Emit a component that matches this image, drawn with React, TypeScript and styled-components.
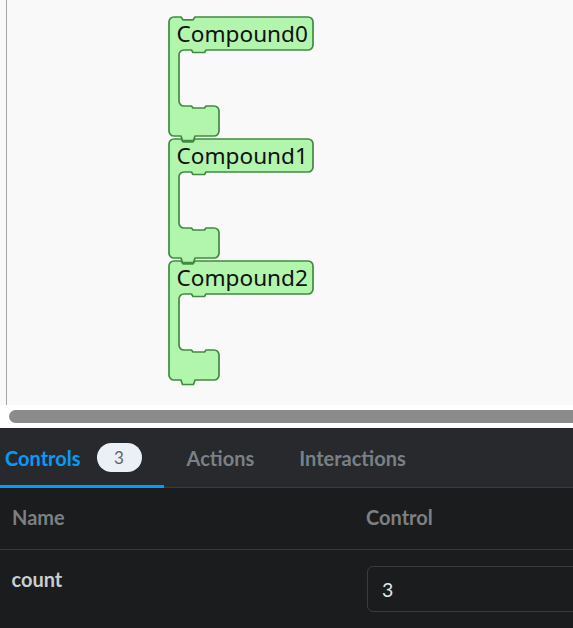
import React from "react";
import styled, { createGlobalStyle } from "styled-components";

const GlobalStyle = createGlobalStyle`
  html, body {
    margin: 0;
    padding: 0;
    background: #1b1c1d;
    overflow: hidden;
  }
  #root {
    width: 573px;
    height: 628px;
  }
`;

const Page = styled.div`
  display: flex;
  flex-direction: column;
  width: 573px;
  height: 628px;
  overflow: hidden;
`;

const Workspace = styled.div`
  position: relative;
  flex: none;
  height: 405px;
  background: #f9f9f9;
  &::before {
    content: "";
    position: absolute;
    left: 6px;
    top: 0;
    bottom: 0;
    width: 1px;
    background: #a6a6a6;
  }
`;

const BlockSvg = styled.svg<{ $top: number }>`
  position: absolute;
  left: 167px;
  top: ${(p) => p.$top}px;
  width: 152px;
  height: 132px;
  overflow: visible;
`;

const BlockPath = styled.path`
  fill: #b2f6ae;
  stroke: #418a41;
  stroke-width: 1.7;
  stroke-linejoin: round;
`;

const BlockLabel = styled.text`
  font-family: "Noto Sans", "Open Sans", sans-serif;
  font-size: 22.6px;
  fill: #111;
`;

const ScrollStrip = styled.div`
  flex: none;
  height: 23px;
  background: #ffffff;
  overflow: hidden;
  display: flex;
  align-items: flex-start;
`;

const ScrollThumb = styled.div`
  flex: none;
  margin: 5px 0 0 8.5px;
  width: 640px;
  height: 13px;
  border-radius: 6.5px;
  background: #8b8b8b;
`;

const Panel = styled.div`
  flex: 1;
  display: flex;
  flex-direction: column;
  background: #1b1c1d;
  font-family: Lato, "Noto Sans", sans-serif;
  overflow: hidden;
`;

const TabBar = styled.div`
  flex: none;
  height: 60px;
  background: #27292c;
  box-shadow: inset 0 -1px 0 #3a3c3f;
  overflow: hidden;
`;

const TabList = styled.div`
  display: flex;
  height: 100%;
  margin-left: -17.5px;
`;

const Tab = styled.div<{ $active?: boolean }>`
  display: flex;
  align-items: center;
  gap: 16px;
  padding: 0 22.5px 1px;
  font-size: 20px;
  font-weight: 700;
  color: ${(p) => (p.$active ? "#029cfd" : "#798186")};
  box-shadow: ${(p) => (p.$active ? "inset 0 -3px 0 #029cfd" : "none")};
  white-space: nowrap;
`;

const Badge = styled.span`
  display: inline-flex;
  align-items: center;
  justify-content: center;
  min-width: 45px;
  height: 29px;
  border-radius: 15px;
  background: #eaf0f6;
  color: #5a656d;
  font-size: 17px;
  font-weight: 400;
`;

const Table = styled.div`
  display: grid;
  grid-template-columns: 366px 1fr;
  overflow: hidden;
`;

const HeadCell = styled.div<{ $first?: boolean }>`
  padding: 17px 0 20px ${(p) => (p.$first ? "12px" : "0")};
  border-bottom: 1px solid #363839;
  font-size: 20px;
  font-weight: 700;
  line-height: 24px;
  color: #7d8083;
`;

const NameCell = styled.div`
  padding: 17px 0 0 11.5px;
  font-size: 20px;
  font-weight: 700;
  line-height: 24px;
  color: #c9cdcf;
`;

const ControlCell = styled.div`
  padding-top: 16px;
  min-width: 0;
`;

const NumberInput = styled.input`
  box-sizing: border-box;
  width: 260px;
  height: 46px;
  margin-left: 1px;
  padding: 0 14px;
  border: 1px solid #3a3d40;
  border-radius: 6px;
  background: transparent;
  color: #e3e5e6;
  font-family: Lato, "Noto Sans", sans-serif;
  font-size: 19.5px;
  outline: none;
`;

const BLOCK_PATH =
  "M0,5 A5,5 0 0 1 5,0 L12,0 L14,2.8 L24,2.8 L26,0 L139,0 A5,5 0 0 1 144,5 L144,28 A5,5 0 0 1 139,33 " +
  "L37,33 L35.5,35.5 L24,35.5 L22.5,33 L15,33 A5,5 0 0 0 10,38 L10,84 A5,5 0 0 0 15,89 " +
  "L22.5,89 L24,91 L35.5,91 L37,89 L45,89 A5,5 0 0 1 50,94 L50,114 A5,5 0 0 1 45,119 " +
  "L26,119 L24.5,123.5 L13.5,123.5 L12,119 L5,119 A5,5 0 0 1 0,114 Z";

const blocks = ["Compound0", "Compound1", "Compound2"];

function Block({ label, top }: { label: string; top: number }) {
  return (
    <BlockSvg $top={top} viewBox="0 0 152 132">
      <g transform="translate(2 2)">
        <BlockPath d={BLOCK_PATH} />
        <BlockLabel x={7.5} y={25.4}>
          {label}
        </BlockLabel>
      </g>
    </BlockSvg>
  );
}

export default function App() {
  return (
    <>
      <GlobalStyle />
      <Page>
        <Workspace>
          {blocks.map((b, i) => (
            <Block key={b} label={b} top={15.3 + i * 122} />
          ))}
        </Workspace>
        <ScrollStrip>
          <ScrollThumb />
        </ScrollStrip>
        <Panel>
          <TabBar>
            <TabList>
              <Tab $active>
                Controls
                <Badge>3</Badge>
              </Tab>
              <Tab>Actions</Tab>
              <Tab>Interactions</Tab>
            </TabList>
          </TabBar>
          <Table>
            <HeadCell $first>Name</HeadCell>
            <HeadCell>Control</HeadCell>
            <NameCell>count</NameCell>
            <ControlCell>
              <NumberInput type="text" defaultValue="3" readOnly />
            </ControlCell>
          </Table>
        </Panel>
      </Page>
    </>
  );
}
